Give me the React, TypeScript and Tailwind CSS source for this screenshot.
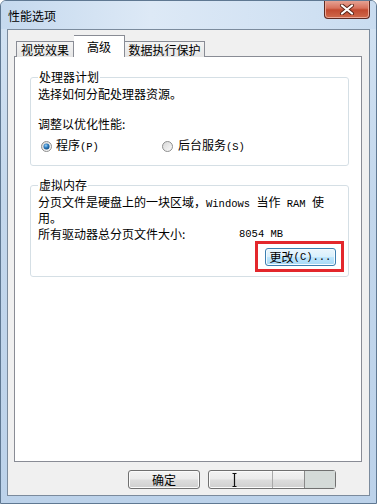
import type { ReactNode } from "react";

const lat = "font-['Liberation_Mono',monospace] text-[10.5px]";

function Radio({ checked }: { checked?: boolean }) {
  const id = checked ? "rb-on" : "rb-off";
  return (
    <svg width="11" height="11" viewBox="0 0 11 11" className="shrink-0">
      <defs>
        <linearGradient id={id + "-bg"} x1="0" y1="0" x2="1" y2="1">
          <stop offset="0" stopColor="#d6d6d6" />
          <stop offset="1" stopColor="#fbfbfb" />
        </linearGradient>
        <radialGradient id={id + "-dot"} cx="0.4" cy="0.35" r="0.7">
          <stop offset="0" stopColor="#9fd3f5" />
          <stop offset="0.5" stopColor="#2d7cc0" />
          <stop offset="1" stopColor="#114a7c" />
        </radialGradient>
      </defs>
      <circle cx="5.5" cy="5.5" r="5" fill={`url(#${id}-bg)`} stroke="#8e8f8f" />
      {checked && <circle cx="5.5" cy="5.5" r="3" fill={`url(#${id}-dot)`} />}
    </svg>
  );
}

function WinButton({ children, className = "" }: { children?: ReactNode; className?: string }) {
  return (
    <div
      className={
        "flex items-center justify-center rounded-[3px] border border-[#707070] bg-[linear-gradient(180deg,#f3f3f3_0%,#ebebeb_48%,#dddddd_52%,#cfcfcf_100%)] shadow-[inset_0_0_0_1px_#fbfbfb] " +
        className
      }
    >
      {children}
    </div>
  );
}

export default function App() {
  return (
    <div className="flex h-[504px] w-[377px] flex-col overflow-hidden rounded-t-[6px] border border-[#5f7892] bg-[linear-gradient(180deg,#d3e3f3_0%,#c3d7ec_40%,#bcd2ea_100%)] font-['Noto_Sans_CJK_SC',sans-serif] text-[12px] leading-[14px] text-black">
      {/* title bar */}
      <div className="flex h-[28px] shrink-0 items-start justify-between bg-[linear-gradient(90deg,#c5d9ee_0%,#dde9f6_40%,#d2e2f3_75%,#c9dcf0_100%)]">
        <span className="pl-[7px] pt-[8px]">性能选项</span>
        <div className="mr-[6px] mt-[-1px] flex h-[19px] w-[46px] items-center justify-center rounded-b-[4px] border border-t-0 border-[#5e2a22] bg-[linear-gradient(180deg,#e7a89a_0%,#d8725d_45%,#c24a30_55%,#cf6a4c_100%)] shadow-[inset_0_0_0_1px_#eba796]">
          <svg width="16" height="11" viewBox="0 0 16 11">
            <path d="M3 1.5 L13 9.5 M13 1.5 L3 9.5" stroke="#5a2418" strokeWidth="4" strokeLinecap="round" />
            <path d="M3 1.5 L13 9.5 M13 1.5 L3 9.5" stroke="#ffffff" strokeWidth="2.2" strokeLinecap="round" />
          </svg>
        </div>
      </div>

      {/* client area */}
      <div className="mx-[6px] flex h-[467px] shrink-0 flex-col border border-[#7b8b9d] bg-[#f0f0f0]">
        {/* tabs */}
        <div className="relative z-10 ml-[8px] mt-[5px] flex h-[22px] items-end">
          <div className="flex h-[16px] w-[58px] items-center justify-center border border-b-0 border-[#898c95] bg-[linear-gradient(180deg,#f4f4f4_0%,#e6e6e6_100%)]">
            视觉效果
          </div>
          <div className="flex h-[22px] w-[51px] items-start justify-center border border-b-0 border-l-0 border-[#898c95] bg-white pt-[4px]">
            高级
          </div>
          <div className="flex h-[16px] w-[80px] items-center justify-center border border-b-0 border-l-0 border-[#898c95] bg-[linear-gradient(180deg,#f4f4f4_0%,#e6e6e6_100%)]">
            数据执行保护
          </div>
        </div>

        {/* tab panel */}
        <div className="ml-[6px] mt-[-1px] flex h-[406px] w-[348px] flex-col border border-[#898c95] bg-white">
          <fieldset className="ml-[15px] mt-[13px] w-[319px] rounded-[3px] border border-[#d5dfe5] px-[7px] pb-[11px] pt-[3px]">
            <legend className="px-[1px]">处理器计划</legend>
            <div>选择如何分配处理器资源。</div>
            <div className="mt-[16px]">调整以优化性能:</div>
            <div className="mt-[7px] flex items-center">
              <div className="flex w-[124px] items-center gap-[4px] pl-[3px]">
                <Radio checked />
                <span>
                  程序<span className={lat}>(P)</span>
                </span>
              </div>
              <div className="flex items-center gap-[5px]">
                <Radio />
                <span>
                  后台服务<span className={lat}>(S)</span>
                </span>
              </div>
            </div>
          </fieldset>

          <fieldset className="ml-[15px] mt-[12px] w-[319px] rounded-[3px] border border-[#d5dfe5] pb-[4px] pl-[7px] pr-[4px] pt-[3px]">
            <legend className="px-[1px]">虚拟内存</legend>
            <div>
              分页文件是硬盘上的一块区域，<span className={lat}>Windows </span>当作<span className={lat}> RAM </span>使
              <br />
              用。
            </div>
            <div className="mt-[2px] flex">
              <span className="w-[201px]">所有驱动器总分页文件大小:</span>
              <span className={lat}>8054 MB</span>
            </div>
            <div className="flex justify-end">
              <div className="border-[3px] border-[#e3272c] pb-[3px] pl-[7px] pr-[5px] pt-[4px]">
                <div className="flex h-[18px] w-[71px] items-center justify-center rounded-[3px] border border-[#3c7fb1] bg-[linear-gradient(180deg,#eaf6fd_0%,#d9f0fc_48%,#bee6fd_52%,#a7d9f5_100%)] shadow-[inset_0_0_0_1px_#f5fbfe]">
                  更改<span className={lat}>(C)...</span>
                </div>
              </div>
            </div>
          </fieldset>
        </div>

        {/* dialog buttons */}
        <div className="ml-[120px] mt-[8px] flex gap-[8px]">
          <WinButton className="h-[19px] w-[72px]">确定</WinButton>
          <WinButton className="h-[19px] w-[128px] !justify-start">
            <div className="flex h-full w-[63px] items-center pl-[23px]">
              <svg width="5" height="14" viewBox="0 0 5 14">
                <path d="M0.5 0.5 H4.5 M2.5 0.5 V13.5 M0.5 13.5 H4.5" stroke="#111" strokeWidth="1.2" fill="none" />
              </svg>
            </div>
            <div className="h-full w-[32px] border-l border-[#a9a9a9]" />
            <div className="h-full flex-1 border-l border-[#8a8a8a] bg-[#d4dad8]" />
          </WinButton>
        </div>
      </div>
    </div>
  );
}
